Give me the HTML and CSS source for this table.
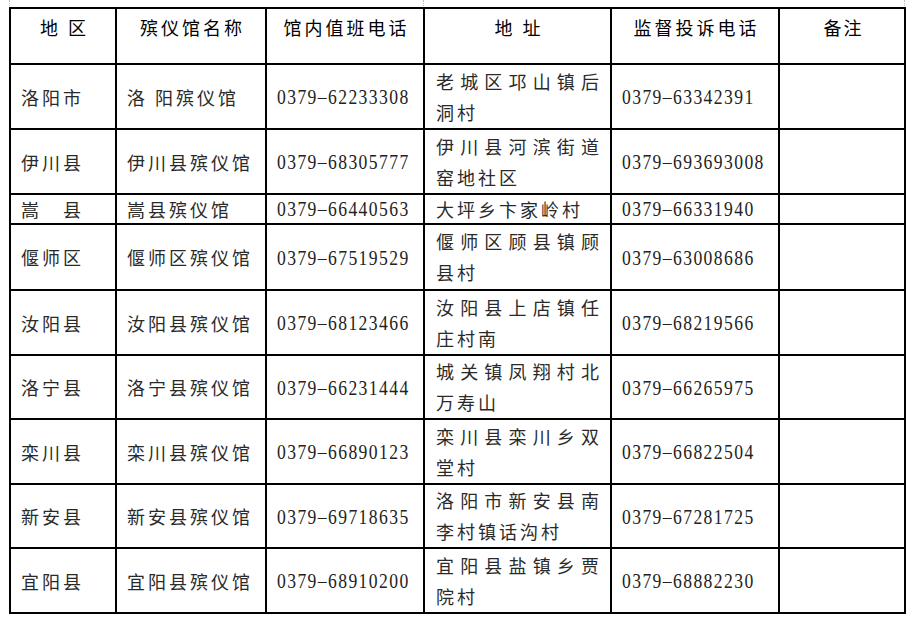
FILE: index.html
```html
<!DOCTYPE html>
<html lang="zh-CN">
<head>
<meta charset="utf-8">
<title>洛阳市殡仪馆信息表</title>
<link rel="stylesheet" href="styles.css">
</head>
<body>
<div class="marks"><span class="mark m1"></span><span class="mark m2"></span><span class="mark m3"></span></div>
<table class="list">
  <thead>
    <tr class="head">
      <th class="c1">地 区</th>
      <th class="c2">殡仪馆名称</th>
      <th class="c3">馆内值班电话</th>
      <th class="c4">地 址</th>
      <th class="c5">监督投诉电话</th>
      <th class="c6 tight">备注</th>
    </tr>
  </thead>
  <tbody>
    <tr class="r65">
      <td>洛阳市</td><td>洛 阳殡仪馆</td><td><span class="num">0379–62233308</span></td>
      <td class="addr">老城区邛山镇后洞村</td><td><span class="num">0379–63342391</span></td><td></td>
    </tr>
    <tr class="r65">
      <td>伊川县</td><td>伊川县殡仪馆</td><td><span class="num">0379–68305777</span></td>
      <td class="addr">伊川县河滨街道窑地社区</td><td><span class="num">0379–693693008</span></td><td></td>
    </tr>
    <tr class="r30">
      <td>嵩　县</td><td>嵩县殡仪馆</td><td><span class="num">0379–66440563</span></td>
      <td class="addr">大坪乡卞家岭村</td><td><span class="num">0379–66331940</span></td><td></td>
    </tr>
    <tr class="r66">
      <td>偃师区</td><td>偃师区殡仪馆</td><td><span class="num">0379–67519529</span></td>
      <td class="addr">偃师区顾县镇顾县村</td><td><span class="num">0379–63008686</span></td><td></td>
    </tr>
    <tr class="r65">
      <td>汝阳县</td><td>汝阳县殡仪馆</td><td><span class="num">0379–68123466</span></td>
      <td class="addr">汝阳县上店镇任庄村南</td><td><span class="num">0379–68219566</span></td><td></td>
    </tr>
    <tr class="r64">
      <td>洛宁县</td><td>洛宁县殡仪馆</td><td><span class="num">0379–66231444</span></td>
      <td class="addr">城关镇凤翔村北万寿山</td><td><span class="num">0379–66265975</span></td><td></td>
    </tr>
    <tr class="r65">
      <td>栾川县</td><td>栾川县殡仪馆</td><td><span class="num">0379–66890123</span></td>
      <td class="addr">栾川县栾川乡双堂村</td><td><span class="num">0379–66822504</span></td><td></td>
    </tr>
    <tr class="r64">
      <td>新安县</td><td>新安县殡仪馆</td><td><span class="num">0379–69718635</span></td>
      <td class="addr">洛阳市新安县南李村镇话沟村</td><td><span class="num">0379–67281725</span></td><td></td>
    </tr>
    <tr class="r65">
      <td>宜阳县</td><td>宜阳县殡仪馆</td><td><span class="num">0379–68910200</span></td>
      <td class="addr">宜阳县盐镇乡贾院村</td><td><span class="num">0379–68882230</span></td><td></td>
    </tr>
  </tbody>
</table>
</body>
</html>
```

FILE: styles.css
```css
* {
  box-sizing: border-box;
}

html,
body {
  margin: 0;
  background: #ffffff;
}

body {
  padding: 0 0 0 9px;
  font-family: "Noto Sans CJK SC", "Noto Sans CJK TC", sans-serif;
  color: #2a2a2a;
}

.marks {
  position: relative;
  width: 897px;
  height: 7px;
}

.mark {
  position: absolute;
  top: 0;
  height: 6px;
  border-left: 1px dotted #bdbdbd;
}

.m1 { left: 0; }
.m2 { left: 414px; }
.m3 { left: 895px; }

.list {
  border-collapse: separate;
  border-spacing: 0;
  table-layout: fixed;
  width: 897px;
  border-top: 2px solid #000;
  border-left: 2px solid #000;
}

.list th,
.list td {
  border-right: 2px solid #000;
  border-bottom: 2px solid #000;
  padding: 0 0 0 10px;
  font-size: 18px;
  letter-spacing: 3px;
  line-height: 26px;
  white-space: nowrap;
  overflow: visible;
}

.c1 { width: 106px; }
.c2 { width: 150px; }
.c3 { width: 158px; }
.c4 { width: 187px; }
.c5 { width: 168px; }
.c6 { width: 126px; }

.list th {
  height: 56px;
  padding: 6px 0 0 3px;
  line-height: 24px;
  vertical-align: top;
  text-align: center;
  font-weight: 400;
  color: #000;
}

.list th.tight {
  letter-spacing: 2px;
}

.list td {
  vertical-align: middle;
  text-align: left;
}

.r65 td { height: 65px; }
.r66 td { height: 66px; }
.r64 td { height: 64px; }
.r30 td { height: 30px; line-height: 24px; }

.list td.addr {
  white-space: normal;
  text-align: justify;
  padding: 0 8px 0 11px;
  line-height: 31px;
}

.r30 td.addr {
  line-height: 24px;
}

.num {
  display: inline-block;
  font-family: "Liberation Serif", "Times New Roman", serif;
  font-size: 22px;
  letter-spacing: 1.75px;
  line-height: 26px;
  transform: scaleX(0.8);
  transform-origin: left center;
  color: #222;
}
```
